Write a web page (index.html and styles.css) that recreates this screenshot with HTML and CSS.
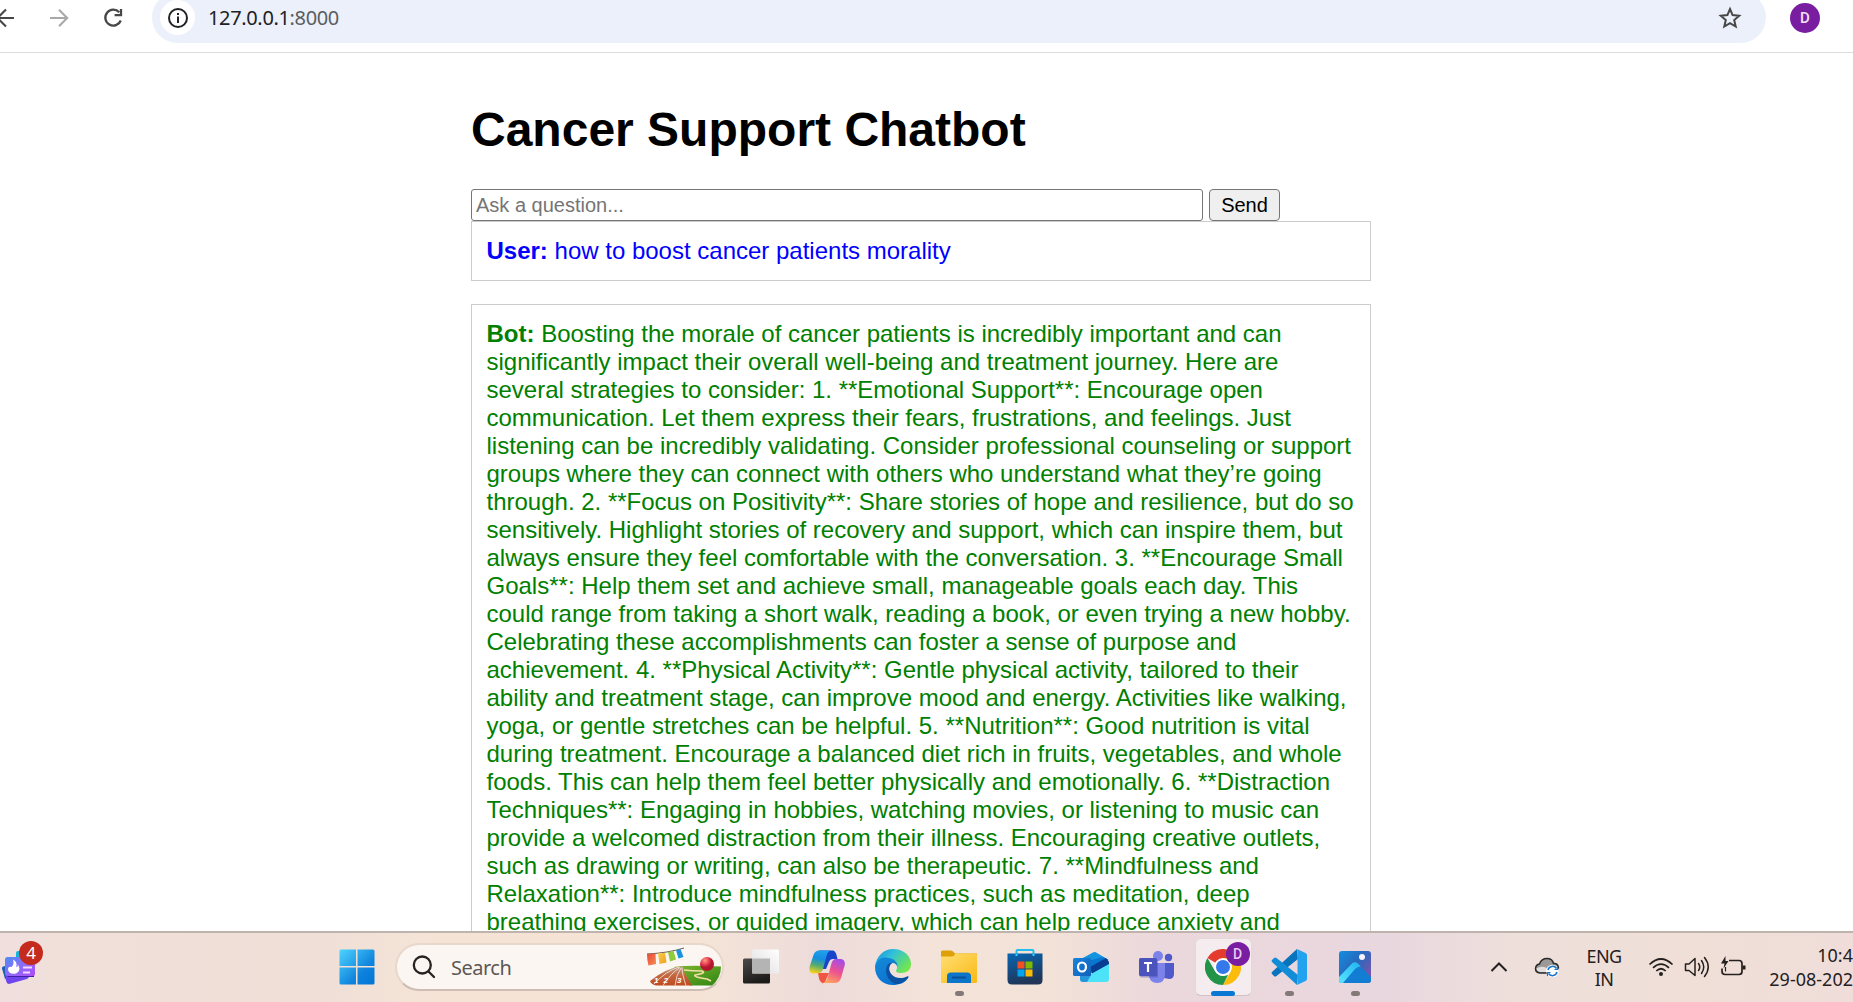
FILE: index.html
```
<!DOCTYPE html>
<html lang="en">
<head>
<meta charset="utf-8">
<title>Cancer Support Chatbot</title>
<link rel="stylesheet" href="styles.css">
</head>
<body>
<header class="toolbar">
  <nav class="nav">
    <svg class="nav-icon" width="24" height="24" viewBox="0 0 24 24" fill="none" stroke="#474747" stroke-width="2.1"><path d="M22 12H7M14 3.5L5.5 12L14 20.5"/></svg>
    <svg class="nav-icon" width="24" height="24" viewBox="0 0 24 24" fill="none" stroke="#a9a9a9" stroke-width="2.1"><path d="M3 12H19M12 3.8L20.2 12L12 20.2"/></svg>
    <svg class="nav-icon" width="24" height="24" viewBox="1 0 24 24" fill="none" stroke="#474747" stroke-width="2.3"><path d="M18.2 6.2A8 8 0 1 0 19.8 14.5"/><path d="M20 3V9.2H13.6"/></svg>
  </nav>
  <div class="address">
    <span class="info"><svg width="22" height="22" viewBox="0 0 22 22"><circle cx="11" cy="11" r="9" fill="none" stroke="#202124" stroke-width="2"/><path d="M10 9.5h2V16h-2zM10 6h2v2h-2z" fill="#202124"/></svg></span>
    <span class="url">127.0.0.1<span class="port">:8000</span></span>
    <svg class="star" width="24" height="24" viewBox="0 0 24 24" fill="none" stroke="#474747" stroke-width="2"><path d="M12 3L14.6 9.1L21.2 9.7L16.2 14L17.7 20.5L12 17.1L6.3 20.5L7.8 14L2.8 9.7L9.4 9.1Z"/></svg>
  </div>
  <span class="avatar">D</span>
</header>

<main class="page">
  <h1 class="title">Cancer Support Chatbot</h1>
  <form class="ask">
    <input class="question" type="text" placeholder="Ask a question...">
    <button class="send" type="button">Send</button>
  </form>
  <p class="message user"><strong>User:</strong> how to boost cancer patients morality</p>
  <p class="message bot"><strong>Bot:</strong> Boosting the morale of cancer patients is incredibly important and can significantly impact their overall well-being and treatment journey. Here are several strategies to consider: 1. **Emotional Support**: Encourage open communication. Let them express their fears, frustrations, and feelings. Just listening can be incredibly validating. Consider professional counseling or support groups where they can connect with others who understand what they’re going through. 2. **Focus on Positivity**: Share stories of hope and resilience, but do so sensitively. Highlight stories of recovery and support, which can inspire them, but always ensure they feel comfortable with the conversation. 3. **Encourage Small Goals**: Help them set and achieve small, manageable goals each day. This could range from taking a short walk, reading a book, or even trying a new hobby. Celebrating these accomplishments can foster a sense of purpose and achievement. 4. **Physical Activity**: Gentle physical activity, tailored to their ability and treatment stage, can improve mood and energy. Activities like walking, yoga, or gentle stretches can be helpful. 5. **Nutrition**: Good nutrition is vital during treatment. Encourage a balanced diet rich in fruits, vegetables, and whole foods. This can help them feel better physically and emotionally. 6. **Distraction Techniques**: Engaging in hobbies, watching movies, or listening to music can provide a welcomed distraction from their illness. Encouraging creative outlets, such as drawing or writing, can also be therapeutic. 7. **Mindfulness and Relaxation**: Introduce mindfulness practices, such as meditation, deep breathing exercises, or guided imagery, which can help reduce anxiety and</p>
</main>

<footer class="taskbar">
  <div class="widgets">
    <svg width="36" height="48" viewBox="0 0 36 48">
      <defs><linearGradient id="card" x1="0" y1="0" x2="1" y2="1"><stop offset="0" stop-color="#4b8df5"/><stop offset=".5" stop-color="#8b6cfb"/><stop offset="1" stop-color="#b04cf4"/></linearGradient></defs>
      <rect x="15" y="9" width="14" height="12" rx="2" fill="#18b4d8"/>
      <path d="M1 26L5 24L28 33Q28 36 26 37L8 42Q6 42 5.500 40Z" fill="#7045ee"/>
      <path d="M1 26Q1 24 5 24V36L4 37Z" fill="#1663ae"/>
      <path d="M5 33h28v2H7Z" fill="#3e23a8"/>
      <rect x="4" y="15" width="30" height="19" rx="2.500" fill="url(#card)"/>
      <path d="M12 17.500Q17 20 15 25Q17 25 17 22.500Q20.500 29 15 31.500Q9 33 7 28Q7 24 10.500 25Q13.500 22 12 17.500Z" fill="#fff"/>
      <path d="M22 25.500h9M22 30.500h7" stroke="#f0dcff" stroke-width="2"/>
    </svg>
    <span class="badge">4</span>
  </div>
  <div class="app"><svg width="36" height="36" viewBox="0 0 36 36">
    <defs><linearGradient id="win" gradientUnits="userSpaceOnUse" x1="0" y1="0" x2="36" y2="36"><stop offset="0" stop-color="#50d5ff"/><stop offset=".65" stop-color="#0e82dc"/><stop offset="1" stop-color="#0075d4"/></linearGradient></defs>
    <path fill="url(#win)" d="M2 .5h15V17H.5V2Q.5.500 2 .5zM18.500.500H34Q35.500.500 35.500 2V17h-17zM.5 18.500H17v17H2Q.5 35.500.500 34zM18.500 18.500h17V34Q35.500 35.500 34 35.500H18.500z"/></svg></div>
  <div class="search">
    <svg width="24" height="24" viewBox="0 0 24 24" fill="none" stroke="#272321" stroke-width="2.3" stroke-linecap="round"><circle cx="10.300" cy="10" r="8.500"/><path d="M16.500 16.500L22 22"/></svg>
    <span class="search-label">Search</span>
    <svg class="scene" width="76" height="42" viewBox="0 0 76 42">
      <defs>
        <linearGradient id="track" x1="0" y1="0" x2="0" y2="1"><stop offset="0" stop-color="#b8a59a"/><stop offset=".45" stop-color="#c46840"/><stop offset="1" stop-color="#bd4b20"/></linearGradient>
        <linearGradient id="grass" x1="0" y1="0" x2="1" y2="1"><stop offset="0" stop-color="#7fb52f"/><stop offset="1" stop-color="#2c8413"/></linearGradient>
        <radialGradient id="ball" cx=".35" cy=".25"><stop offset="0" stop-color="#ff9b83"/><stop offset=".6" stop-color="#e63f50"/><stop offset="1" stop-color="#b3162f"/></radialGradient>
        <linearGradient id="flag1" x1="0" y1="0" x2="1" y2="1"><stop offset="0" stop-color="#e84b35"/><stop offset="1" stop-color="#f58a55"/></linearGradient>
        <linearGradient id="flag2" x1="0" y1="0" x2="1" y2="1"><stop offset="0" stop-color="#f6d24c"/><stop offset="1" stop-color="#f29a1d"/></linearGradient>
      </defs>
      <path d="M1 8Q22 7 38 2" fill="none" stroke="#6c5b50" stroke-width="1"/>
      <path d="M1 8l8.500-.5l.5 10.500l-7.500 1.500Q1 14 1 8z" fill="url(#flag1)"/>
      <path d="M12 7.500l7-.8l1.500 9.800l-7 1.500z" fill="url(#flag2)"/>
      <path d="M22 6l5.500-1l2.500 8.500l-6 2z" fill="#8fcb3a"/>
      <path d="M30 4.500l4.500-1.500l3 8l-5 1.500z" fill="#1a93dd"/>
      <path d="M28 21Q40 19 75 20.500Q75 32 66 39.500H44z" fill="url(#grass)"/>
      <path d="M4 35Q20 22 35 20.500Q39 21 37 24L46 39.500H10Q5 38 4 35z" fill="url(#track)"/>
      <path d="M8 38Q20 25 33 21M17 39.500Q25 27 34 21.500M29 39.500Q30 29 35 22M40 39.500Q36 28 36 21.500" fill="none" stroke="#f4dccc" stroke-width=".9"/>
      <path d="M38 24Q46 25 56 25Q61 27 49 29Q47 31 61 33L65 35" fill="none" stroke="#f3dfa6" stroke-width="1.600"/>
      <text class="lane" x="17.500" y="37">2</text><text class="lane" x="31" y="37">3</text><text class="lane" x="8" y="37">1</text>
      <circle cx="61" cy="18" r="7" fill="url(#ball)"/>
    </svg>
  </div>
  <div class="app"><svg width="36" height="36" viewBox="0 0 36 36">
    <defs><linearGradient id="tv1" x1="0" y1="0" x2=".4" y2="1"><stop offset="0" stop-color="#4c4b4a"/><stop offset="1" stop-color="#1d1c1b"/></linearGradient><linearGradient id="tv2" x1="1" y1="0" x2="0" y2="1"><stop offset="0" stop-color="#fff"/><stop offset="1" stop-color="#dedddd"/></linearGradient></defs>
    <rect x="0" y="9.500" width="27" height="25" rx="1.500" fill="url(#tv1)"/><rect x="9" y=".5" width="27" height="24" rx="1.500" fill="url(#tv2)"/><rect x="9" y="9.500" width="18" height="15" fill="#b5b4b4"/></svg></div>
  <div class="app"><svg width="36" height="36" viewBox="0 0 36 36">
    <defs>
      <linearGradient id="cp1" x1=".5" y1="0" x2=".3" y2="1"><stop offset="0" stop-color="#1ea0ec"/><stop offset=".35" stop-color="#168de0"/><stop offset=".65" stop-color="#53ad70"/><stop offset="1" stop-color="#ffd21c"/></linearGradient>
      <linearGradient id="cp2" x1=".7" y1="0" x2=".3" y2="1"><stop offset="0" stop-color="#a54ce9"/><stop offset=".5" stop-color="#ee5290"/><stop offset="1" stop-color="#ffa35e"/></linearGradient>
    </defs>
    <path d="M10 1.500H24Q26.500 2 27.500 6L28.500 10H24Q21 10 20 13L17 20H11Z" fill="#1746ca"/>
    <path d="M9 24H20L16 33Q15 34.500 13 34Q11 33 10 29.500Z" fill="#ef5540"/>
    <path d="M10 1.500H21Q18.500 3 17.500 7L14 20Q12.500 24.500 8 24.500H4Q0 24.500.500 18L4.500 6Q6 1.500 10 1.500Z" fill="url(#cp1)"/>
    <path d="M26 10H32Q37 11 35.500 17L32 29Q30.500 34 26 34H14Q17 33 18.500 29L22 16Q23 11 26 10Z" fill="url(#cp2)"/></svg></div>
  <div class="app"><svg width="36" height="36" viewBox="0 0 36 36">
    <defs>
      <linearGradient id="ed1" x1="0" y1="0" x2="1" y2=".6"><stop offset="0" stop-color="#168ddb"/><stop offset=".45" stop-color="#32c1da"/><stop offset="1" stop-color="#70e64f"/></linearGradient>
      <linearGradient id="ed2" x1="0" y1="0" x2=".6" y2="1"><stop offset="0" stop-color="#148bd8"/><stop offset="1" stop-color="#0b6fd0"/></linearGradient>
    </defs>
    <path d="M0 18C1 7 9 0 18 0C29 0 36 7 36 15C36 21 32 24 26 24C22 24 20 22.500 21.500 20.500C23 18.500 22 14 18 13Q8 7 0 18Z" fill="url(#ed1)"/>
    <path d="M0 18C2 9 8 7.500 14 9C20 10 23 14 22.500 18C22 16 20 14 17.500 14C13 15 12 22 16 27C20 31 28 30 32 28C33 27.500 34 28 33 29C30 34 24 36 18 36C8 36 0 29 0 18Z" fill="url(#ed2)"/>
    <path d="M15 14C10 16 9 27 17 33C20 35.500 23 35.500 25 34.500Q30 33 33 29C34 27.500 33 27 32 27.500C22 32 14 26 14.200 19Q14.300 16 17 14Z" fill="#0c52a2"/>
    </svg></div>
  <div class="app open"><svg width="36" height="36" viewBox="0 0 36 36">
    <defs><linearGradient id="fd" x1="0" y1="0" x2="1" y2="1"><stop offset="0" stop-color="#ffdf74"/><stop offset="1" stop-color="#fab914"/></linearGradient></defs>
    <path d="M0 3Q0 1.500 1.500 1.500H10Q11.500 1.500 12.500 3L14 4.500H36V11H0z" fill="#dea006"/><path d="M0 7.500H11Q13 7.500 14 5L15 4.500H34.500Q36 4.500 36 6V32.500Q36 34 34.500 34H1.500Q0 34 0 32.500z" fill="url(#fd)"/>
    <path d="M6 34V27Q6 23.500 10 23.500H26Q30 23.500 30 27V34z" fill="#0b75ca"/><path d="M11 28.500H25" stroke="#084f94" stroke-width="1.800"/></svg></div>
  <div class="app"><svg width="36" height="36" viewBox="0 0 36 36">
    <defs><linearGradient id="ms" x1="0" y1="0" x2=".3" y2="1"><stop offset="0" stop-color="#0866b4"/><stop offset="1" stop-color="#203557"/></linearGradient></defs>
    <path d="M9.500 7V2Q9.500 1 10.500 1H25.500Q26.500 1 26.500 2V7" fill="none" stroke="#20bdf0" stroke-width="2"/><path d="M.5 4.500H35.500V31Q35.500 35.500 31 35.500H5Q.5 35.500.500 31z" fill="url(#ms)"/><path d="M9.500 7V4.500M26.500 7V4.500" stroke="#35d0fb" stroke-width="2"/>
    <path fill="#f25022" d="M10.500 12.500h7v7h-7z"/><path fill="#7fba00" d="M18.500 12.500h7v7h-7z"/><path fill="#00a4ef" d="M10.500 20.500h7v7h-7z"/><path fill="#ffb900" d="M18.500 20.500h7v7h-7z"/></svg></div>
  <div class="app"><svg width="36" height="36" viewBox="0 0 36 36">
    <defs><linearGradient id="ol" x1="0" y1="0" x2="1" y2="1"><stop offset="0" stop-color="#1684dc"/><stop offset="1" stop-color="#1260ba"/></linearGradient></defs>
    <path d="M6 11L20 3.500Q22 2.500 24 4L35 10.500L30 24H8z" fill="#1593df"/><path d="M15 12L30 8L35.500 11L20 23z" fill="#0877cf"/><path d="M17 18L33 9L36 13V17L20 28z" fill="#093d91"/>
    <path d="M7 20L18 25L36 15V30Q36 33 33 33H10Q7 33 7 30z" fill="#4ce2f8"/><path d="M7 24L18 26L14 33H10Q7 33 7 30z" fill="#2794dc"/>
    <rect x="0" y="9" width="18" height="18" rx="1.500" fill="url(#ol)"/><ellipse cx="9" cy="18" rx="4" ry="4.500" fill="none" stroke="#fff" stroke-width="2.200"/></svg></div>
  <div class="app"><svg width="36" height="36" viewBox="0 0 36 36">
    <circle cx="19" cy="7" r="5" fill="#7b83eb"/><circle cx="29.500" cy="8.500" r="3.700" fill="#5059c9"/><path d="M25 14H35V25Q35 30 30 30L25 29z" fill="#5059c9"/><path d="M10 14H26V25Q26 34 18 34Q11 34 10 27z" fill="#7b83eb"/>
    <rect x="1" y="10.500" width="18" height="18" rx="1.500" fill="#3940a0" opacity=".4"/><rect x="0" y="9" width="18" height="18" rx="1.500" fill="#4b53bc"/><path d="M5 14H13M9 14V23" stroke="#fff" stroke-width="2.200"/></svg></div>
  <div class="app open active"><div class="tile"><svg width="36" height="36" viewBox="0 0 36 36">
    <path d="M18 18L2.400 9A18 18 0 0 1 33.600 9H18z" fill="#e33b2e"/><path d="M18 9H33.600A18 18 0 0 1 18 36L25.800 22.500z" fill="#fbbc0b"/><path d="M2.400 9L10.200 22.500Q14 27 18 27L23 26L18 36A18 18 0 0 1 2.400 9z" fill="#239447"/>
    <circle cx="18" cy="18" r="9" fill="#fff"/><circle cx="18" cy="18" r="7" fill="#3478e9"/></svg><span class="profile">D</span></div></div>
  <div class="app open"><svg width="36" height="36" viewBox="0 0 36 36">
    <path d="M26 0L1 23Q0 24 1 25L3 27Q4 28 5.500 27L27 10z" fill="#0874bd"/><path d="M26 36L1 13Q0 12 1 11L3 9Q4 8 5.500 9L27 26z" fill="#118dd7"/><path d="M26 0L34.500 4Q36 5 36 6V30Q36 31.500 34.500 32L26 36Q26.500 35 26.500 33V3Q26.500 1 26 0z" fill="#23a3ef"/></svg></div>
  <div class="app open"><svg width="32" height="32" viewBox="0 0 32 32">
    <defs><linearGradient id="ph" x1="0" y1="0" x2="1" y2=".8"><stop offset="0" stop-color="#138de0"/><stop offset=".5" stop-color="#2869bd"/><stop offset="1" stop-color="#8052ac"/></linearGradient><linearGradient id="hill" x1="0" y1="1" x2="1" y2="0"><stop offset="0" stop-color="#59e6ff"/><stop offset="1" stop-color="#20b3ef"/></linearGradient><clipPath id="phc"><rect width="32" height="32" rx="3"/></clipPath></defs>
    <g clip-path="url(#phc)"><rect width="32" height="32" fill="url(#ph)"/><path d="M4 32L16 17Q20 14 24 18L32 26V32z" fill="#117ed3"/><path d="M0 26L13 12.500Q16 10 19 12.500L22 15.500Q19 15 16 18L4 32H0z" fill="url(#hill)"/></g><circle cx="23" cy="6" r="3" fill="#f5f3ff"/></svg></div>
  <div class="tray">
    <svg class="chevron" width="18" height="12" viewBox="0 0 18 12" fill="none" stroke="#24201f" stroke-width="2"><path d="M1.500 10L9 2.500L16.500 10"/></svg>
    <svg class="cloud" width="26" height="22" viewBox="0 0 26 22">
      <path d="M6 17Q1.500 16.500 1.500 12.500Q2 8.500 5.500 8Q7.500 2.500 13 2.500Q18.500 2.500 19.500 7.500Q24 7 24.500 12Q24 17 20 17z" fill="#9b9998" stroke="#2b2928" stroke-width="1.500"/><path d="M2.500 12.500Q9 8 17 15V16H6Q3 15.500 2.500 12.500z" fill="#e1dddd"/>
      <circle cx="18.500" cy="15" r="6.300" fill="#fff"/><path d="M14 14A4.700 4.700 0 0 1 22.500 12.500M23 16A4.700 4.700 0 0 1 14.500 17.500" fill="none" stroke="#1874c8" stroke-width="1.500"/><path d="M23.500 10V13.500H20.500M13.500 20V16.500H16.500" fill="none" stroke="#1874c8" stroke-width="1.200"/></svg>
    <div class="lang"><span>ENG</span><span>IN</span></div>
    <div class="status">
      <svg width="26" height="22" viewBox="0 0 26 22" fill="none" stroke="#24201f" stroke-width="1.700"><path d="M1.500 8.500Q13-2.500 24.500 8.500M5 11.800Q13 4.500 21 11.800M8.300 15Q13 10.500 17.700 15"/><circle cx="13" cy="18" r="2" fill="#24201f" stroke="none"/></svg>
      <svg width="26" height="22" viewBox="0 0 26 22" fill="none" stroke="#24201f" stroke-width="1.500" stroke-linejoin="round" stroke-linecap="round"><path d="M1.500 8H5L11 2.500V19.500L5 14.500H1.500zM14.500 7.500Q17 11 14.500 14.500M17.500 4.500Q22 11 17.500 17.500M20.500 1.500Q28 11 20.500 20.500"/></svg>
      <svg width="26" height="22" viewBox="0 0 26 22" fill="none" stroke="#24201f" stroke-width="1.700"><path d="M9 4.500H19Q22 4.500 22 7.500V15.500Q22 18.500 19 18.500H5Q2 18.500 2 15.500V12.500"/><path d="M22.500 9.500H25.500V13.500H22.500z" fill="#24201f" stroke="none"/><path d="M5.500 0L1 7.500H4.500L3.500 12.500L8.500 5H5.500z" fill="#24201f" stroke="none"/><path d="M5.500 11V15.500" stroke-width="1.200"/></svg>
    </div>
    <div class="clock"><span>10:4</span><span>29-08-202</span></div>
  </div>
</footer>
</body>
</html>
```
FILE: styles.css
```
* { box-sizing: border-box; }

body {
  margin: 0;
  width: 1853px;
  height: 1002px;
  overflow: hidden;
  display: flex;
  flex-direction: column;
  background: #fff;
  font-family: "Liberation Sans", Arial, sans-serif;
}

/* Browser toolbar */
.toolbar {
  flex: none;
  display: flex;
  align-items: flex-start;
  height: 53px;
  border-bottom: 1px solid #dcdcdc;
  overflow: hidden;
}
.nav { display: flex; gap: 31px; width: 152px; padding-top: 6px; margin-left: -8px; flex: none; }
.nav-icon { flex: none; }
.address {
  display: flex;
  align-items: center;
  width: 1614px;
  height: 51px;
  margin: -8px 0 0 8px;
  padding: 0 24px 0 8px;
  border-radius: 26px;
  background: #ecf0fa;
}
.info {
  display: flex;
  align-items: center;
  justify-content: center;
  width: 35px;
  height: 35px;
  border-radius: 50%;
  background: #fff;
}
.url {
  margin-left: 13px;
  font: 20px/28px "Noto Sans", sans-serif;
  letter-spacing: -0.35px;
  color: #202124;
}
.port { color: #5a5d61; }
.star { margin-left: auto; }
.avatar {
  display: flex;
  align-items: center;
  justify-content: center;
  width: 30px;
  height: 30px;
  margin: 3px 0 0 24px;
  border-radius: 50%;
  background: #7a1ea1;
  color: #f3e2f8;
  font: 500 15px/1 Roboto, sans-serif;
}

/* Chat page */
.page {
  flex: 1;
  min-height: 0;
  overflow: hidden;
  width: 900px;
  margin-left: 471px;
}
.title { margin: 49px 0 31px; font-size: 48px; line-height: 56px; font-weight: bold; color: #000; }
.ask { display: flex; gap: 6px; }
.question {
  width: 732px;
  height: 32px;
  padding: 1px 4px;
  border: 1px solid #767676;
  border-radius: 3px;
  font: 20px "Liberation Sans", Arial, sans-serif;
}
.question::placeholder { color: #757575; }
.send {
  width: 71px;
  height: 32px;
  padding: 0;
  border: 1px solid #767676;
  border-radius: 4px;
  background: #efefef;
  color: #000;
  font: 20px "Liberation Sans", Arial, sans-serif;
}
.message {
  margin: 0 0 23px;
  padding: 15px 15px 15px 14.5px;
  border: 1px solid #ccc;
  font-size: 24px;
  line-height: 28px;
}
.user { color: #00f; }
.bot { color: green; }

/* Taskbar */
.taskbar {
  flex: none;
  display: flex;
  height: 71px;
  border-top: 2px solid #bfb4ad;
  background: linear-gradient(90deg, #f0dfde 0, #f0e0d9 60px, #f0dfd7 320px, #f5e4d6 440px, #f5e4d6 700px, #eddbdb 820px, #f3e3d8 930px, #f2e2d7 1050px, #ebd8dc 1160px, #e9d7df 1390px, #eedfdb 1510px, #efdfd7 1700px, #f0ddda 1853px);
  font-family: "Noto Sans", sans-serif;
}
.widgets { position: relative; width: 324px; padding: 9px 0 0 1px; }
.badge {
  position: absolute;
  left: 19px;
  top: 8px;
  width: 24px;
  height: 24px;
  border-radius: 50%;
  background: #c42b1c;
  color: #fff;
  text-align: center;
  font-size: 17px;
  line-height: 24px;
}
.app {
  position: relative;
  display: flex;
  align-items: center;
  justify-content: center;
  width: 66px;
  height: 68px;
}
.app.open::after {
  content: "";
  position: absolute;
  left: 29px;
  top: 58px;
  width: 9px;
  height: 5px;
  border-radius: 3px;
  background: #837a78;
}
.app.active::after { left: 21px; width: 24px; background: #0878d4; }
.tile {
  position: relative;
  display: flex;
  align-items: center;
  justify-content: center;
  width: 57px;
  height: 58px;
  border: 1px solid #e5d8da;
  border-bottom-color: #cfc1c5;
  border-radius: 6px;
  background: #f5ecef;
}
.profile {
  position: absolute;
  left: 30px;
  top: 3px;
  width: 24px;
  height: 24px;
  border-radius: 50%;
  background: #7a1ea1;
  color: #e7cbef;
  text-align: center;
  font: 500 14px/24px Roboto, sans-serif;
}
.search {
  display: flex;
  align-items: center;
  width: 329px;
  height: 48px;
  margin: 10px 4px 0 5px;
  padding-left: 15px;
  border: 2px solid #e8d7cb;
  border-bottom-color: #cdbdb2;
  border-radius: 24px;
  background: #fcf6f2;
}
.search-label { margin-left: 15px; font-size: 20px; letter-spacing: -0.5px; color: #5c5855; }
.scene { margin-left: auto; }
.lane { font: italic bold 8px "Liberation Sans", sans-serif; fill: #fff; }
.tray {
  display: flex;
  align-items: center;
  width: 465px;
  height: 68px;
  padding-left: 102px;
  font-size: 18px;
  line-height: 24px;
  color: #24201f;
}
.chevron { margin-right: 26px; }
.lang { display: flex; flex-direction: column; align-items: center; width: 64px; margin-left: 12px; padding-top: 1px; line-height: 23px; letter-spacing: -0.6px; }
.status { display: flex; gap: 10px; margin-left: 12px; }
.clock { display: flex; flex-direction: column; align-items: flex-end; margin-left: auto; letter-spacing: 0; }
```
